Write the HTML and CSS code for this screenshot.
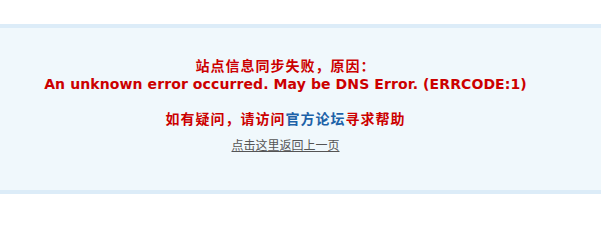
FILE: index.html
```html
<!DOCTYPE html>
<html lang="zh-CN">
<head>
<meta charset="utf-8">
<title>提示信息</title>
<link rel="stylesheet" href="styles.css">
</head>
<body>
<div class="box">
  <div class="inner">
    <p class="msg">
      <span class="zh">站点信息同步失败，原因：</span><br>
      <span class="en">An unknown error occurred. May be DNS Error. (ERRCODE:1)</span>
    </p>
    <p class="help zh">如有疑问，请访问<a class="forum" href="#">官方论坛</a>寻求帮助</p>
    <p class="back"><a href="#">点击这里返回上一页</a></p>
  </div>
</div>
</body>
</html>
```
FILE: styles.css
```css
html, body {
  margin: 0;
  padding: 0;
  background: #ffffff;
}
body {
  font-family: "DejaVu Sans", Verdana, "Noto Sans CJK SC", sans-serif;
}
.box {
  margin-top: 24px;
  border-top: 4px solid #dcecf8;
  border-bottom: 4px solid #dcecf8;
  background: #f0f8fc;
  height: 162px;
  box-sizing: content-box;
}
.inner {
  padding: 28px 30px 0 0;
  text-align: center;
}
.msg {
  margin: 0;
  color: #cc0000;
  font-weight: bold;
  font-size: 14px;
  line-height: 18px;
}
.zh {
  font-family: "Noto Sans CJK SC", sans-serif;
  letter-spacing: 1px;
}
.en {
  font-family: "DejaVu Sans", Verdana, sans-serif;
  letter-spacing: 0.1px;
}
.help {
  margin: 16px 0 0;
  color: #cc0000;
  font-weight: bold;
  font-size: 14px;
  line-height: 18px;
}
.forum {
  color: #1d62a8;
  text-decoration: none;
}
.back {
  margin: 10px 0 0;
  font-family: "Noto Sans CJK SC", sans-serif;
  font-size: 12px;
  line-height: 16px;
}
.back a {
  color: #555555;
  text-decoration: underline;
}
```
